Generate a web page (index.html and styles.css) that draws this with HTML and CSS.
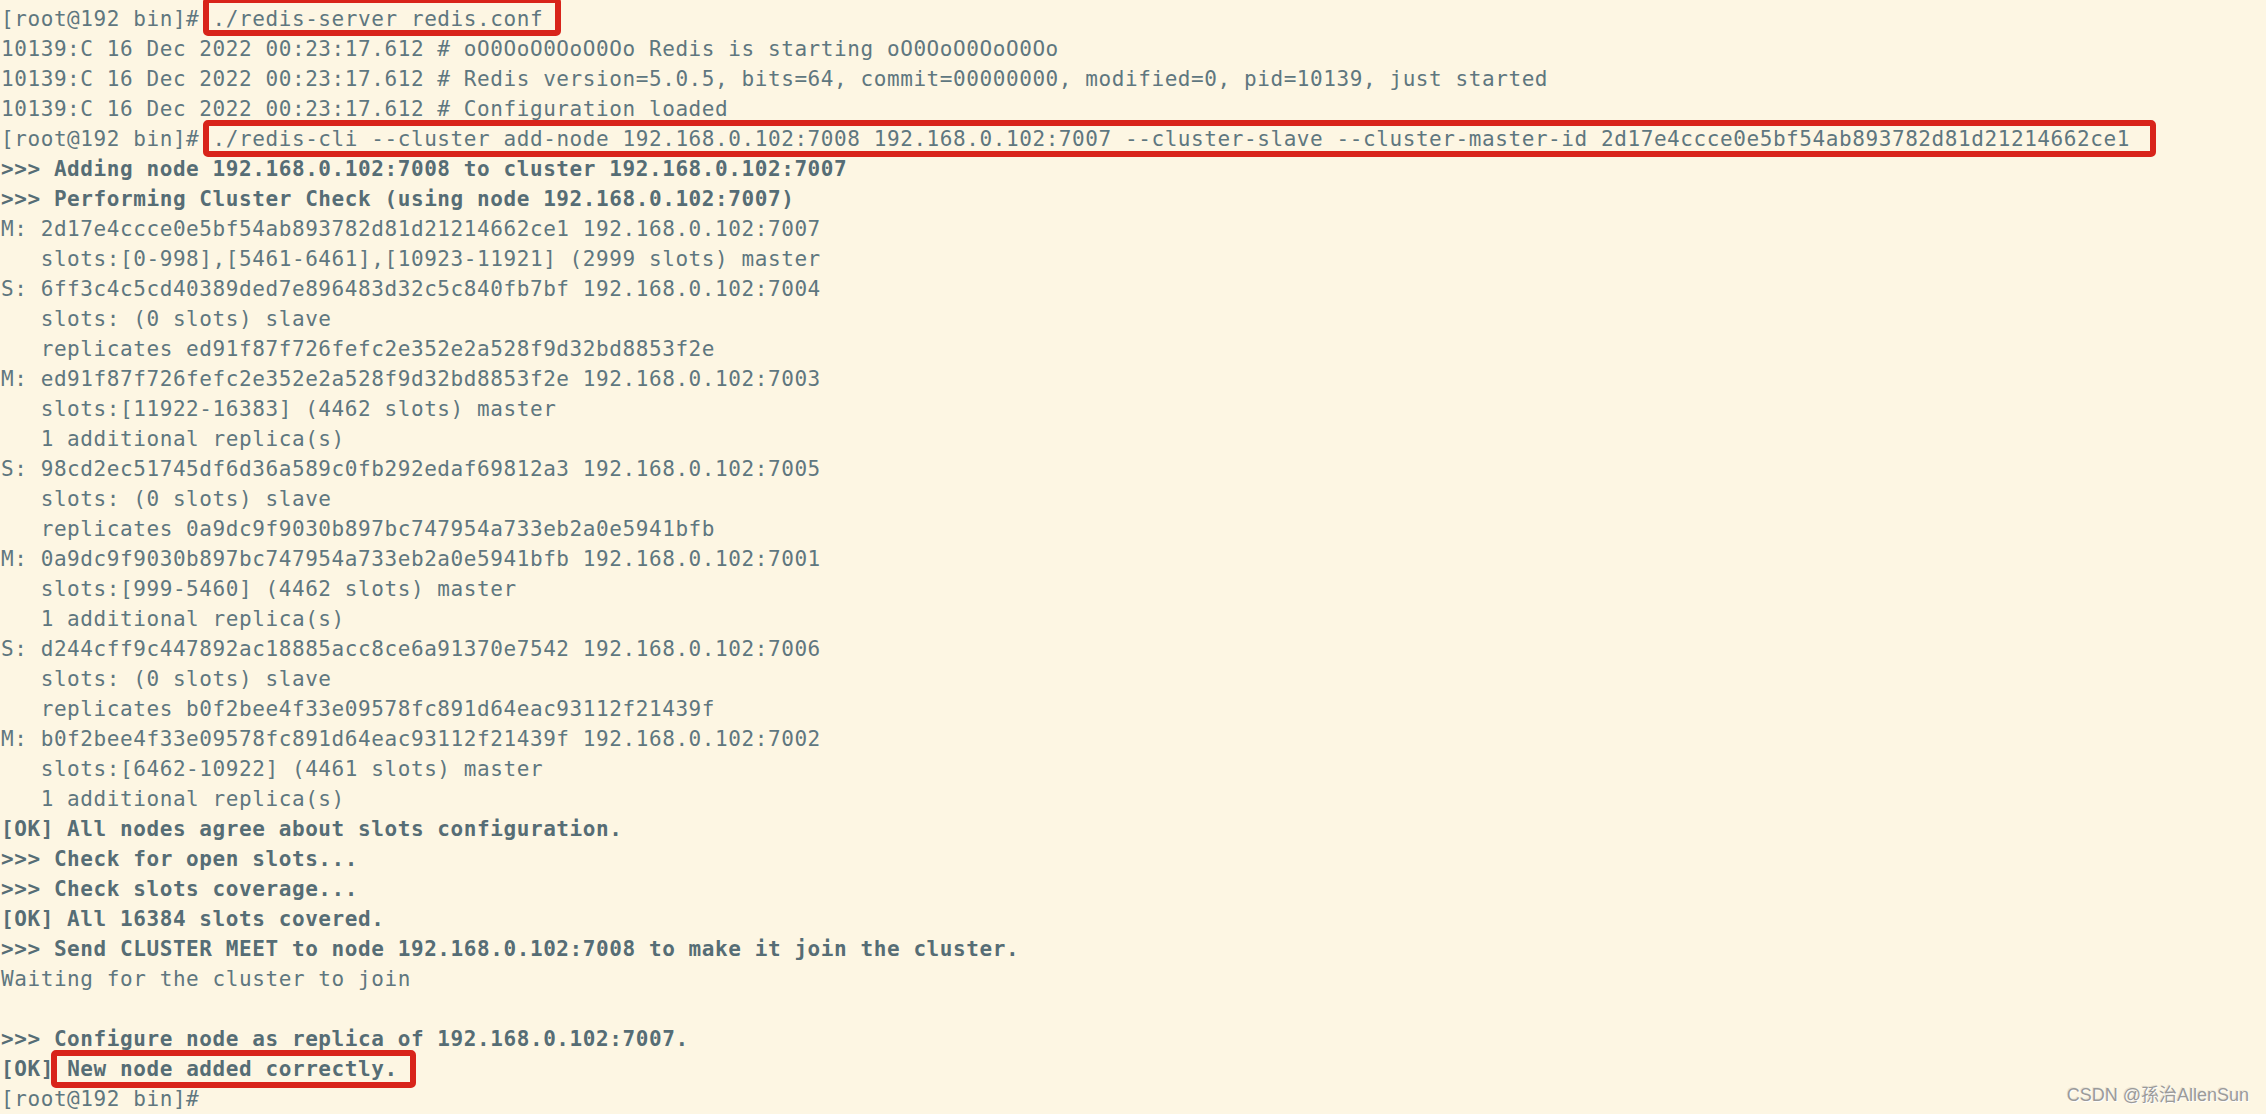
FILE: index.html
```html
<!DOCTYPE html>
<html lang="en">
<head>
<meta charset="utf-8">
<title>redis cluster add-node</title>
<link rel="stylesheet" href="styles.css">
</head>
<body>
<main class="screen">
<pre class="term">[root@192 bin]# <span class="mark mark-1">./redis-server redis.conf</span>
10139:C 16 Dec 2022 00:23:17.612 # oO0OoO0OoO0Oo Redis is starting oO0OoO0OoO0Oo
10139:C 16 Dec 2022 00:23:17.612 # Redis version=5.0.5, bits=64, commit=00000000, modified=0, pid=10139, just started
10139:C 16 Dec 2022 00:23:17.612 # Configuration loaded
[root@192 bin]# <span class="mark mark-2">./redis-cli --cluster add-node 192.168.0.102:7008 192.168.0.102:7007 --cluster-slave --cluster-master-id 2d17e4ccce0e5bf54ab893782d81d21214662ce1</span>
<b>&gt;&gt;&gt; Adding node 192.168.0.102:7008 to cluster 192.168.0.102:7007</b>
<b>&gt;&gt;&gt; Performing Cluster Check (using node 192.168.0.102:7007)</b>
M: 2d17e4ccce0e5bf54ab893782d81d21214662ce1 192.168.0.102:7007
   slots:[0-998],[5461-6461],[10923-11921] (2999 slots) master
S: 6ff3c4c5cd40389ded7e896483d32c5c840fb7bf 192.168.0.102:7004
   slots: (0 slots) slave
   replicates ed91f87f726fefc2e352e2a528f9d32bd8853f2e
M: ed91f87f726fefc2e352e2a528f9d32bd8853f2e 192.168.0.102:7003
   slots:[11922-16383] (4462 slots) master
   1 additional replica(s)
S: 98cd2ec51745df6d36a589c0fb292edaf69812a3 192.168.0.102:7005
   slots: (0 slots) slave
   replicates 0a9dc9f9030b897bc747954a733eb2a0e5941bfb
M: 0a9dc9f9030b897bc747954a733eb2a0e5941bfb 192.168.0.102:7001
   slots:[999-5460] (4462 slots) master
   1 additional replica(s)
S: d244cff9c447892ac18885acc8ce6a91370e7542 192.168.0.102:7006
   slots: (0 slots) slave
   replicates b0f2bee4f33e09578fc891d64eac93112f21439f
M: b0f2bee4f33e09578fc891d64eac93112f21439f 192.168.0.102:7002
   slots:[6462-10922] (4461 slots) master
   1 additional replica(s)
<b>[OK] All nodes agree about slots configuration.</b>
<b>&gt;&gt;&gt; Check for open slots...</b>
<b>&gt;&gt;&gt; Check slots coverage...</b>
<b>[OK] All 16384 slots covered.</b>
<b>&gt;&gt;&gt; Send CLUSTER MEET to node 192.168.0.102:7008 to make it join the cluster.</b>
Waiting for the cluster to join

<b>&gt;&gt;&gt; Configure node as replica of 192.168.0.102:7007.</b>
<b>[OK] <span class="mark mark-3">New node added correctly.</span></b>
[root@192 bin]#</pre>
<div class="watermark">CSDN @孫治AllenSun</div>
</main>
</body>
</html>
```

FILE: styles.css
```css
html, body {
  margin: 0;
  padding: 0;
  background: #fdf6e3;
}

.screen {
  position: relative;
  width: 2266px;
  height: 1114px;
  overflow: hidden;
  background: #fdf6e3;
}

.term {
  margin: 0;
  padding: 4px 0 0 1px;
  font-family: "DejaVu Sans Mono", "Liberation Mono", monospace;
  font-size: 21px;
  letter-spacing: 0.58px;
  line-height: 30px;
  color: #5f777f;
  white-space: pre;
}

.term b {
  font-weight: bold;
  color: #566d75;
}

.mark {
  position: relative;
  display: inline-block;
  height: 30px;
  line-height: 30px;
  vertical-align: top;
}

.mark::after {
  content: "";
  position: absolute;
  border: 6px solid #d8241a;
  border-radius: 5px;
  pointer-events: none;
}

.mark-1::after {
  left: -10px;
  right: -18px;
  top: -7px;
  bottom: -2px;
}

.mark-2::after {
  left: -10px;
  right: -26px;
  top: -4px;
  bottom: -3px;
}

.mark-3::after {
  left: -16px;
  right: -18px;
  top: -4px;
  bottom: -4px;
}

.watermark {
  position: absolute;
  right: 17px;
  bottom: 8px;
  font-family: "Liberation Sans", Arial, "Noto Sans CJK SC", sans-serif;
  font-size: 18px;
  line-height: 22px;
  color: #9a9a9a;
  text-shadow: 1px 1px 0 rgba(255, 255, 255, 0.9), -1px -1px 0 rgba(120, 120, 120, 0.15);
}
```
